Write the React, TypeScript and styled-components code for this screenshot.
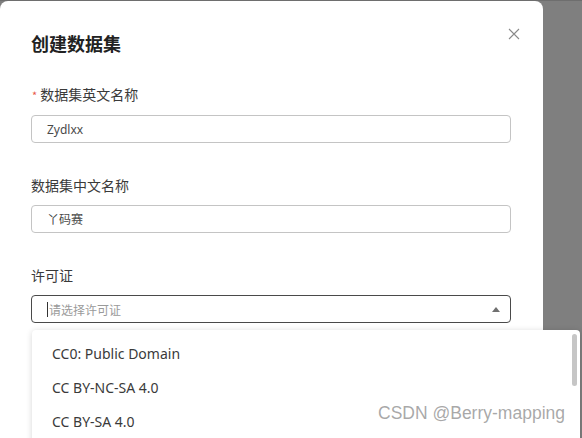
import React from "react";
import styled, { createGlobalStyle } from "styled-components";

const GlobalStyle = createGlobalStyle`
  html, body {
    margin: 0;
    padding: 0;
    background: #7f7f7f;
  }
  body {
    font-family: "Noto Sans", "Noto Sans CJK SC", sans-serif;
  }
`;

const LICENSES = ["CC0: Public Domain", "CC BY-NC-SA 4.0", "CC BY-SA 4.0"];

export default function App(): React.ReactElement {
  return (
    <>
      <GlobalStyle />
      <Page>
        <Modal>
          <Header>
            <Title>创建数据集</Title>
            <CloseButton aria-label="close">
              <svg width="12" height="12" viewBox="0 0 12 12">
                <path d="M1 1L11 11M11 1L1 11" stroke="#8a8a8a" strokeWidth="1.1" />
              </svg>
            </CloseButton>
          </Header>

          <Field>
            <Label>
              <Required>*</Required>数据集英文名称
            </Label>
            <Input>Zydlxx</Input>
          </Field>

          <Field>
            <Label>数据集中文名称</Label>
            <Input>丫码赛</Input>
          </Field>

          <Field>
            <Label>许可证</Label>
            <SelectWrap>
              <Select $focused>
                <Caret />
                <Placeholder>请选择许可证</Placeholder>
                <Arrow />
              </Select>
              <Dropdown>
                {LICENSES.map((name) => (
                  <Option key={name}>{name}</Option>
                ))}
                <ScrollThumb />
              </Dropdown>
            </SelectWrap>
          </Field>
        </Modal>
        <Watermark>CSDN @Berry-mapping</Watermark>
      </Page>
    </>
  );
}

// Styled Components
const Page = styled.div`
  position: relative;
  width: 582px;
  height: 438px;
  overflow: hidden;
  background: #7f7f7f;
  border-top: 1px solid #6e6e6e;
  box-sizing: border-box;
`;

const Modal = styled.div`
  width: 543px;
  height: 460px;
  box-sizing: border-box;
  background: #fff;
  border-radius: 8px;
  padding: 29px 32px 0 31px;
  display: flex;
  flex-direction: column;
  gap: 31px;
`;

const Header = styled.div`
  display: flex;
  justify-content: space-between;
  align-items: flex-start;
  margin-bottom: -4px;
`;

const Title = styled.div`
  font-family: "Noto Sans CJK SC", sans-serif;
  font-size: 18px;
  font-weight: 700;
  line-height: 26px;
  color: #222;
`;

const CloseButton = styled.button`
  border: none;
  background: transparent;
  padding: 0;
  width: 12px;
  height: 12px;
  margin: -2px -9px 0 0;
  display: flex;
  cursor: pointer;
`;

const Field = styled.div`
  display: flex;
  flex-direction: column;
  gap: 9px;
`;

const Label = styled.div`
  font-family: "Noto Sans CJK SC", sans-serif;
  font-size: 14px;
  line-height: 22px;
  color: #3a3a3a;
`;

const Required = styled.span`
  color: #e8584a;
  font-size: 11px;
  margin: 0 3px 0 1px;
`;

const Input = styled.div`
  height: 28px;
  box-sizing: border-box;
  border: 1px solid #c4c4c4;
  border-radius: 4px;
  padding: 0 15px;
  display: flex;
  align-items: center;
  font-family: "Noto Sans", "Noto Sans CJK SC", sans-serif;
  font-size: 12px;
  color: #4a4a4a;
`;

const SelectWrap = styled.div`
  position: relative;
`;

const Select = styled.div<{ $focused?: boolean }>`
  height: 28px;
  box-sizing: border-box;
  border: 1px solid ${(p) => (p.$focused ? "#4a4a4a" : "#c4c4c4")};
  border-radius: 4px;
  padding: 0 10px 0 15px;
  display: flex;
  align-items: center;
  gap: 1px;
`;

const Caret = styled.span`
  width: 1px;
  height: 15px;
  background: #333;
`;

const Placeholder = styled.span`
  flex: 1;
  font-family: "Noto Sans CJK SC", sans-serif;
  font-size: 12px;
  color: #9a9a9a;
`;

const Arrow = styled.span`
  width: 0;
  height: 0;
  border-left: 4px solid transparent;
  border-right: 4px solid transparent;
  border-bottom: 5px solid #707070;
`;

const Dropdown = styled.div`
  position: absolute;
  top: 35px;
  left: 1px;
  width: 548px;
  box-sizing: border-box;
  padding: 7px 0;
  background: #fff;
  border-radius: 4px;
  box-shadow: 0 1px 6px rgba(0, 0, 0, 0.16);
`;

const Option = styled.div`
  height: 34px;
  line-height: 34px;
  padding: 0 20px;
  font-family: "Noto Sans", sans-serif;
  font-size: 14px;
  color: #3a3a3a;
`;

const ScrollThumb = styled.div`
  position: absolute;
  top: 4px;
  right: 3px;
  width: 5px;
  height: 52px;
  border-radius: 3px;
  background: #c6c6c6;
`;

const Watermark = styled.div`
  position: absolute;
  left: 378px;
  top: 402px;
  font-family: "Liberation Sans", Arial, sans-serif;
  font-size: 17.5px;
  color: rgba(140, 140, 140, 0.75);
  white-space: nowrap;
`;
